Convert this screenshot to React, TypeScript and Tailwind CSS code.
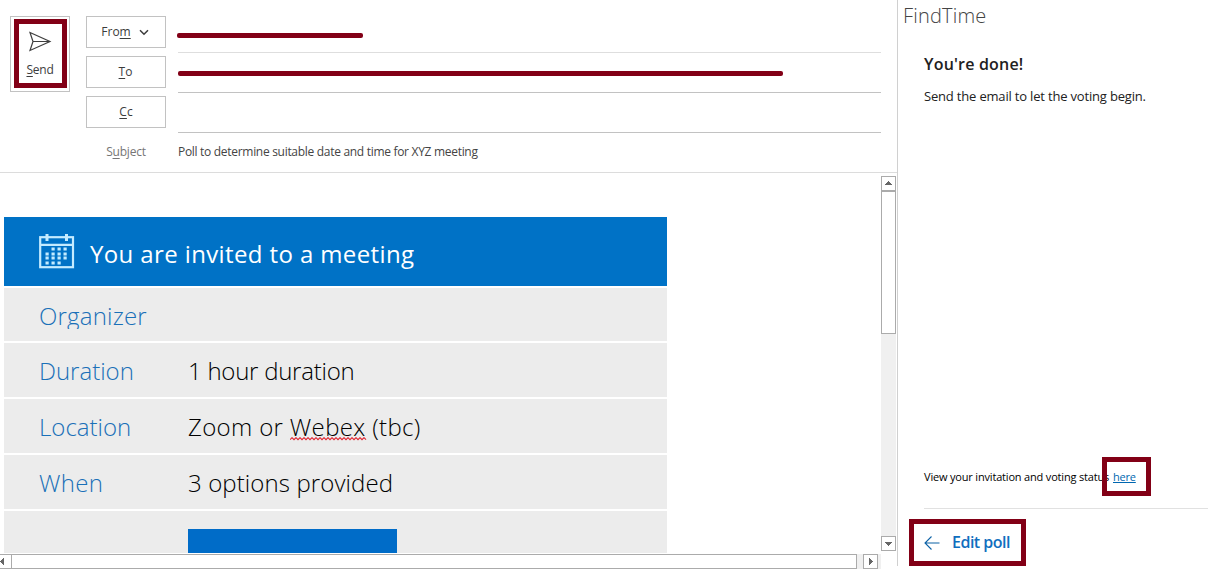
import React from "react";

const ui = "font-['Open_Sans','Noto_Sans',sans-serif]";

function Field({ label, children, line }: { label: React.ReactNode; children?: React.ReactNode; line: string }) {
  return (
    <div className="flex h-10">
      <button className="flex h-8 w-20 items-center justify-center border border-[#c2c2c2] bg-white text-[12px] text-[#3c3c3c]">
        {label}
      </button>
      <div className={`ml-3 h-[37px] flex-1 border-b ${line}`}>{children}</div>
    </div>
  );
}

function CalendarIcon() {
  const dots = [
    [52, 0], [58, 0], [64, 0],
    [46, 5], [52, 5], [58, 5], [64, 5],
    [46, 9], [52, 9], [58, 9], [64, 9],
    [46, 14], [52, 14], [58, 14],
  ];
  return (
    <svg width="36" height="35" viewBox="0 0 36 35" fill="none" stroke="#c4ebff">
      <rect x="1.2" y="3.2" width="32.8" height="30" strokeWidth="2.2" />
      <path d="M1 10.8H34" strokeWidth="2.2" />
      <path d="M8 0V7M27.5 0V7" strokeWidth="3" />
      <g fill="#c4ebff" stroke="none">
        {dots.map(([x, y]) => (
          <rect key={`${x}-${y}`} x={x - 39.5} y={y + 13.5} width="3.2" height="3" />
        ))}
      </g>
    </svg>
  );
}

function Row({ label, value, height, labelStyle }: { label: string; value?: React.ReactNode; height: string; labelStyle?: string }) {
  return (
    <div className={`flex items-center bg-[#ececec] pl-[35px] text-[24px] font-light ${height}`}>
      <div className={`w-[149px] leading-[32px] text-[#1a70b8] ${labelStyle ?? ""}`}>{label}</div>
      <div className="leading-[32px] whitespace-nowrap text-black">{value}</div>
    </div>
  );
}

function Arrow({ d }: { d: string }) {
  return (
    <svg width="13" height="13" viewBox="0 0 13 13" fill="#666" shapeRendering="crispEdges">
      <path d={d} />
    </svg>
  );
}

function Misspelled({ children }: { children: string }) {
  const points = Array.from({ length: 39 }, (_, i) => `${i * 2},${i % 2 ? 0.7 : 2.7}`).join(" ");
  return (
    <span className="relative inline-block">
      {children}
      <svg className="absolute bottom-[2px] left-0" width="77" height="4" viewBox="0 0 77 4" fill="none" stroke="#e0202c" strokeWidth="1.1">
        <polyline points={points} />
      </svg>
    </span>
  );
}

function Header() {
  return (
    <header className="flex h-[173px] border-b border-[#dcdcdc] pt-4 pl-[10px]">
      <button className="flex h-[76px] w-[60px] items-start border border-[#c2c2c2] pt-[2px] pl-[3px]">
        <div className="flex h-[69px] w-[53px] flex-col items-center border-5 border-[#820016] text-[12px] text-[#3c3c3c]">
          <svg className="mt-[7px]" width="23" height="21" viewBox="0 0 23 21" fill="none" stroke="#3f3f3f" strokeWidth="1.2">
            <path d="M1 1.5L21 10.5L1 19.5L4 10.5ZM4 10.5H21" />
          </svg>
          <span className="mt-[9px] mr-px leading-[18px] tracking-[-0.25px]">
            <u className="underline-offset-2">S</u>end
          </span>
        </div>
      </button>
      <div className="ml-4 w-[795px]">
        <Field
          line="border-[#dedede]"
          label={
            <span className="mr-[2px] flex items-center gap-[8px]">
              <span>Fro<u className="underline-offset-2">m</u></span>
              <svg width="10" height="7" viewBox="0 0 10 7" fill="none" stroke="#3c3c3c" strokeWidth="1.5">
                <path d="M1 1.2L5 5.3L9 1.2" />
              </svg>
            </span>
          }
        >
          <div className="mt-[17px] -ml-px h-[5px] w-[186px] rounded-[2px] bg-[#820016]" />
        </Field>
        <Field line="border-[#c2c2c2]" label={<span className="mr-px"><u className="underline-offset-2">T</u>o</span>}>
          <div className="mt-[15px] h-[5px] w-[605px] rounded-[2px] bg-[#820016]" />
        </Field>
        <Field line="border-[#c2c2c2]" label={<span><u className="underline-offset-2">C</u>c</span>} />
        <div className="flex h-8 items-center text-[12px]">
          <span className="w-20 text-center tracking-[-0.2px] text-[#767676]">S<u className="underline-offset-2">u</u>bject</span>
          <span className="ml-3 tracking-[-0.3px] whitespace-nowrap text-[#444]">Poll to determine suitable date and time for XYZ meeting</span>
        </div>
      </div>
    </header>
  );
}

function Message() {
  return (
    <div className="flex h-[380px]">
      <div className="flex-1 overflow-hidden pt-[44px] pl-1">
        <div className="flex w-[663px] flex-col gap-[2px]">
          <div className="flex h-[69px] items-center bg-[#0072c6] pl-[35px] text-[24px] text-white">
            <CalendarIcon />
            <span className="mt-[5px] ml-[15px] tracking-[0.38px] whitespace-nowrap">You are invited to a meeting</span>
          </div>
          <Row height="h-[53px] pt-[2px]" labelStyle="h-[29px] overflow-hidden mb-[3px] tracking-[0.2px]" label="Organizer" />
          <Row height="h-[54px] pt-[2px]" label="Duration" value={<span className="tracking-[-0.25px]">1 hour duration</span>} />
          <Row
            height="h-[54px] pt-[2px]"
            label="Location"
            value={
              <span className="tracking-[0.35px]">
                Zoom or <Misspelled>Webex</Misspelled> (tbc)
              </span>
            }
          />
          <Row height="h-[54px] pt-[2px]" labelStyle="tracking-[0.3px]" label="When" value={<span className="tracking-[0.1px]">3 options provided</span>} />
          <div className="h-[42px] bg-[#ececec] pt-[18px] pl-[184px]">
            <div className="h-6 w-[209px] bg-[#006cc8]" />
          </div>
        </div>
      </div>
      <div className="mt-[3px] mr-px flex h-[375px] w-[15px] flex-col bg-[#f0f0f0]">
        <div className="h-[15px] border border-[#ababab] bg-white"><Arrow d="M6 4h1v1h1v1h1v1h1v1H3V7h1V6h1V5h1z" /></div>
        <div className="h-[143px] border border-[#ababab] bg-white" />
        <div className="mt-auto h-[15px] border border-[#ababab] bg-white"><Arrow d="M3 5h7v1H9v1H8v1H7v1H6V8H5V7H4V6H3z" /></div>
      </div>
    </div>
  );
}

function BottomBar() {
  return (
    <div className="mt-px flex h-[15px] w-[881px] bg-[#f0f0f0]">
      <div className="w-[11px] overflow-hidden border-y border-[#ababab] bg-white">
        <div className="-ml-[4px]"><Arrow d="M8 3v7H7V9H6V8H5V7H4V6h1V5h1V4h1V3z" /></div>
      </div>
      <div className="w-[846px] border border-[#ababab] bg-white" />
      <div className="ml-[6px] w-[15px] border border-[#ababab] bg-white"><Arrow d="M5 3v7h1V9h1V8h1V7h1V6H8V5H7V4H6V3z" /></div>
    </div>
  );
}

function FindTime() {
  return (
    <aside className="flex h-[570px] flex-1 flex-col">
      <h1 className="mt-[2px] ml-[5px] text-[20px] leading-[28px] font-light tracking-[0.2px] text-[#444]">FindTime</h1>
      <h2 className="mt-[22px] ml-[26px] text-[16px] leading-6 font-semibold tracking-[0.2px] text-[#212121]">You're done!</h2>
      <p className="mt-[10px] ml-[26px] text-[13px] leading-5 tracking-[-0.18px] whitespace-nowrap text-[#212121]">Send the email to let the voting begin.</p>
      <div className="mt-[351px] ml-[26px] flex h-[39px] items-center text-[11px] leading-4 whitespace-nowrap text-black">
        <span className="mt-px w-[178px] tracking-[-0.18px]">View your invitation and voting status</span>
        <a className="relative z-10 flex h-[39px] w-[49px] items-center border-5 border-[#820016] pt-px pl-[6px] text-[#0067b0]">
          <span className="tracking-[-0.2px] underline">here</span>
        </a>
      </div>
      <div className="mt-[12px] ml-[26px] border-t border-[#e1e1e1]" />
      <button className="mt-[10px] ml-[11px] flex h-[47px] w-[117px] items-center border-5 border-[#820016] pl-[10px] text-[16px] font-semibold text-[#106ebe]">
        <svg width="16" height="14" viewBox="0 0 16 14" fill="none" stroke="#0d62a6" strokeWidth="1.1">
          <path d="M7.5 .5L1 7L7.5 13.5M1 7H15.5" />
        </svg>
        <span className="mb-px ml-[12px] tracking-[-0.5px] whitespace-nowrap">Edit poll</span>
      </button>
    </aside>
  );
}

export default function App() {
  return (
    <div className={`flex h-[570px] w-[1208px] overflow-hidden bg-white ${ui}`}>
      <main className="w-[897px]">
        <Header />
        <Message />
        <BottomBar />
      </main>
      <div className="h-[566px] w-px bg-[#d0d0d0]" />
      <FindTime />
    </div>
  );
}
